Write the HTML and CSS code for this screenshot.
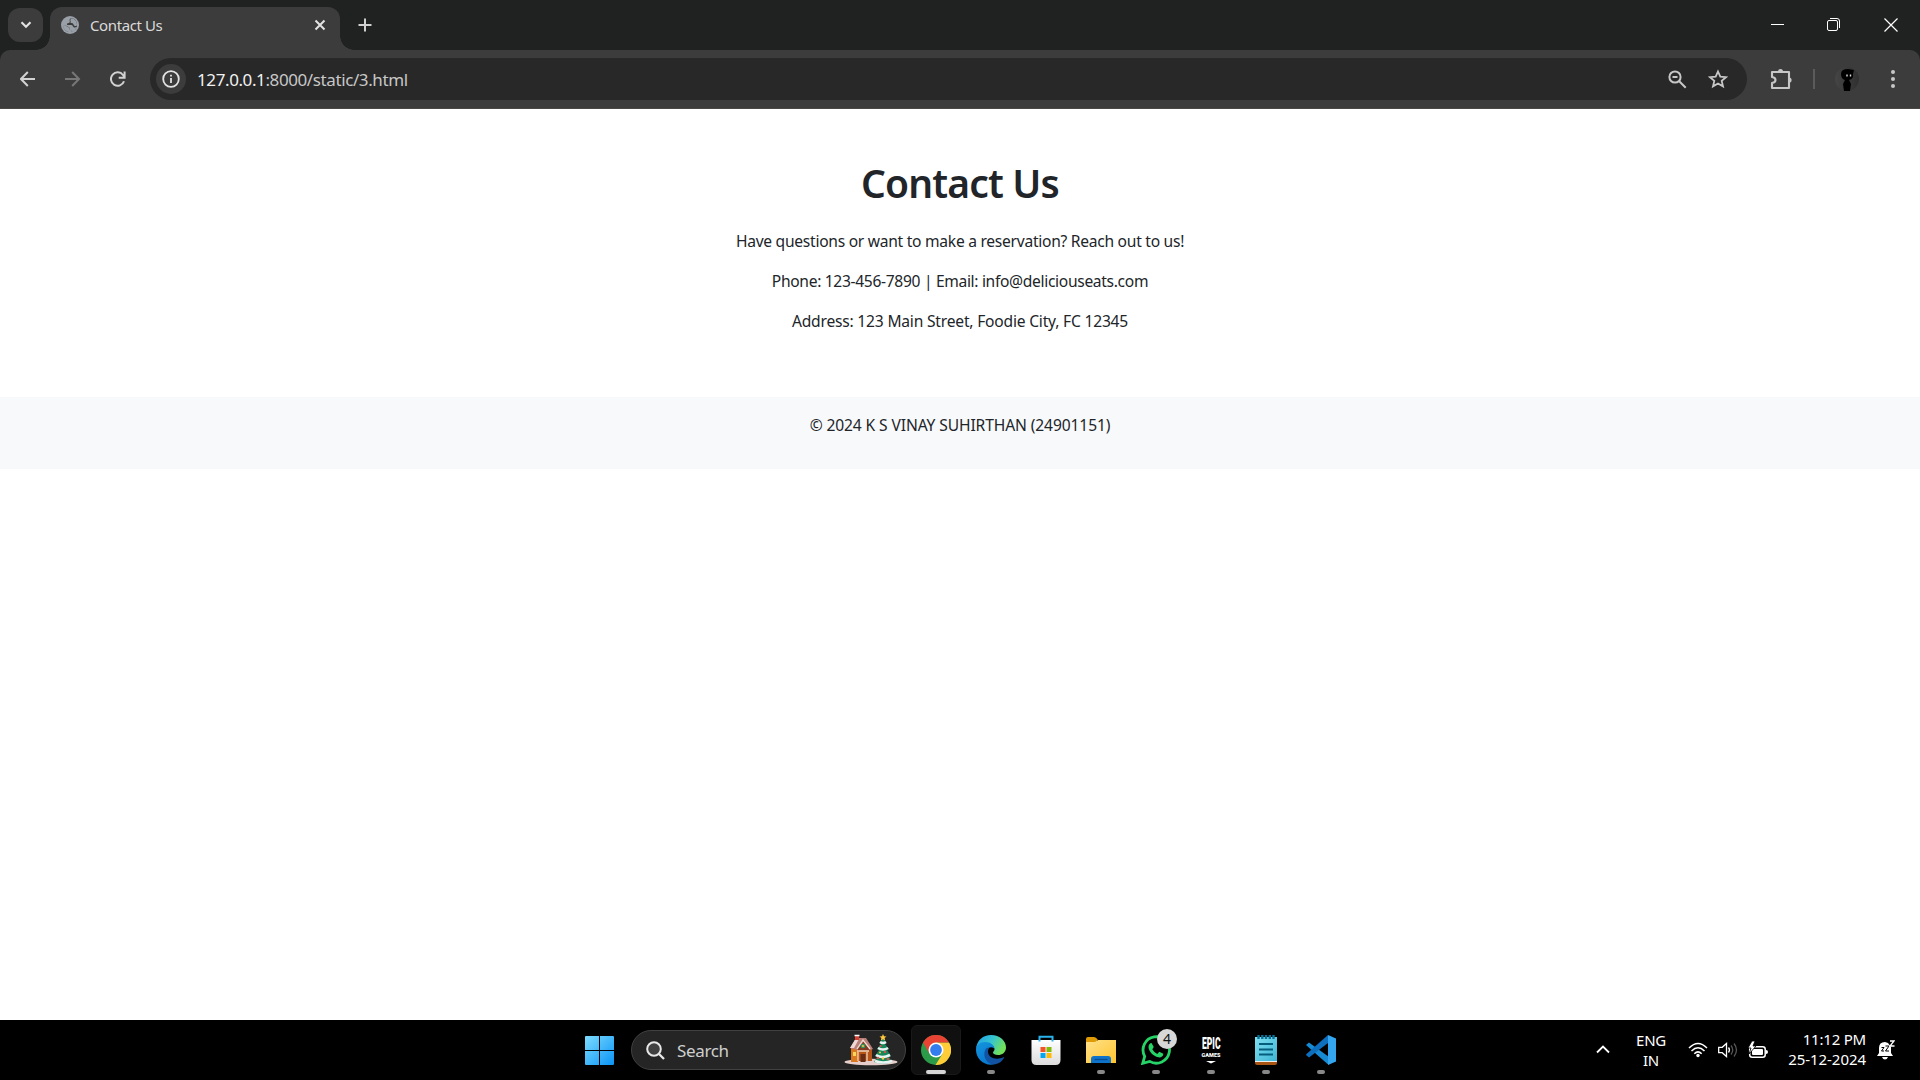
FILE: index.html
```html
<!DOCTYPE html>
<html lang="en">
<head>
<meta charset="utf-8">
<title>Contact Us</title>
<link rel="stylesheet" href="styles.css">
</head>
<body>
<div class="desktop">
  <div class="browser-top">
  <header class="tabstrip">
    <button class="tab-search"><svg width="12" height="8" viewBox="0 0 12 8"><path d="M1.5 1.2 6 5.7l4.500-4.500" fill="none" stroke="#e3e3e3" stroke-width="2.100"/></svg></button>
    <div class="tab">
      <svg class="favicon" width="18" height="18" viewBox="0 0 18 18"><circle cx="9" cy="9" r="9" fill="#9aa0a8"/><path d="M11 2.200C9 3 8.800 4 9.200 5.300c.3 1.200-.7 1.900-2 1.900-1 .1-1.200.8-.8 1.600h4.300c1.300 0 1.200 2.200 2.500 2.300.9.100 1.800.2 2.500-.4.700-4-1.500-7.500-4.700-8.500Z" fill="#9aa0a8"/><path d="M10.300 2.100C8.500 3 8.300 4.200 8.800 5.200c.2 1.300-.7 1.900-1.900 2-1 .1-1.200 1-.6 1.700h4c1.700 0 1.500 2.300 2.900 2.500.9.100 1.900 0 2.600-.6-.8 2.600-3 4.700-5.700 5.200l.1-1.800c-1.800-.1-2.200-1-1.600-2.600C7.400 11.200 5.500 10 4.300 9.300L2 9.500C3 14 6 16 9 16c4-.2 7-3 7-7s-2.500-6.500-5.700-6.900Z" fill="#3c3c3c"/><path d="m2 9 2.500.3c1 .9 2.500 2 4.100 2.300-.6 1.600-.2 2.500 1.600 2.600L10.100 16C5.500 16.500 2 13 2 9ZM10.500 2.200c3.500.4 5.700 3.500 5.500 7-.8 1-2 .9-2.600.6-1-.5-.7-2.500-2.400-2.800H9.300c.8-.7.400-1.600.1-2.300-.2-1 .2-1.800 1.100-2.500Z" fill="#9aa0a8"/></svg>
      <span class="tab-title">Contact Us</span>
      <svg width="12" height="12" viewBox="0 0 12 12"><path d="m1.500 1.500 9 9m0-9-9 9" stroke="#e3e3e3" stroke-width="2"/></svg>
    </div>
    <svg class="new-tab" width="14" height="14" viewBox="0 0 14 14"><path d="M7 .5v13M.5 7h13" stroke="#d0d0d0" stroke-width="2"/></svg>
    <div class="window-controls">
      <svg width="14" height="14" viewBox="0 0 14 14"><path d="M1 6.500h13" stroke="#fff"/></svg>
      <svg width="14" height="14" viewBox="0 0 14 14" fill="none" stroke="#fff"><rect x=".5" y="2.500" width="10" height="10" rx="1.500"/><path d="M3 .5h7q2.500 0 2.500 2.500v7"/></svg>
      <svg width="14" height="14" viewBox="0 0 14 14"><path d="m.5.5 13 13m0-13-13 13" stroke="#fff" stroke-width="1.200"/></svg>
    </div>
  </header>

  <nav class="toolbar">
    <div class="nav-buttons">
      <svg width="16" height="16" viewBox="0 0 16 16" fill="none" stroke="#d2d2d2" stroke-width="2"><path d="M15 8H1.500M7.800 1 1 8l6.800 7"/></svg>
      <svg width="16" height="16" viewBox="0 0 16 16" fill="none" stroke="#777" stroke-width="2"><path d="M0 8h13.500M7.200 1 14 8l-6.800 7"/></svg>
      <svg width="16" height="16" viewBox="0 0 16 16" fill="none" stroke="#d2d2d2" stroke-width="2"><path d="M14 10.200A6.700 6.700 0 1 1 13 4l1.300 2M14.600.5v6.200H8.700"/></svg>
    </div>
    <div class="omnibox">
      <span class="site-info"><svg width="18" height="18" viewBox="0 0 18 18" fill="none" stroke="#e3e3e3" stroke-width="1.800"><circle cx="9" cy="9" r="7.800"/><path d="M9 8v5M9 4.700v1.900"/></svg></span>
      <span class="url"><span class="host">127.0.0.1</span>:8000/static/3.html</span>
      <svg class="zoom-icon" width="19" height="19" viewBox="0 0 19 19" fill="none" stroke="#c7c7c7" stroke-width="2"><circle cx="7" cy="7" r="5.600"/><path d="m11 11 6.700 6.700M4.500 7h5"/></svg>
      <svg width="20" height="20" viewBox="0 0 20 20" fill="none" stroke="#c7c7c7" stroke-width="1.800"><path d="m10 2.500 2.300 5.200 5.700.5-4.300 3.700 1.300 5.500-5-2.900-5 2.900 1.300-5.500L2 8.200l5.700-.5Z"/></svg>
    </div>
    <svg class="extensions" width="22" height="22" viewBox="0 0 22 22"><path d="M2 4h17v16H2v-5q3.500-.5 3.500-3T2 9Z" fill="none" stroke="#c7c7c7" stroke-width="2.100" stroke-linejoin="round"/><path d="M8 3.500a2.500 2.500 0 0 1 5 0M19 9.500a2.600 2.600 0 0 1 0 5.200" fill="#c7c7c7"/></svg>
    <span class="divider"></span>
    <svg class="avatar" width="24" height="26" viewBox="0 0 24 26"><defs><linearGradient id="av"><stop stop-color="#454545"/><stop offset="1" stop-color="#303030"/></linearGradient></defs><circle cx="12" cy="13" r="12" fill="url(#av)"/><path d="M6 8q0-5 7-5l6 1-1 4q1 5-4 6l2 4-1 7H9L8 18l2-4q-4-1-4-6Z" fill="#000"/><path d="M12 8.500v2M15.500 8.500v2" stroke="#ddd" stroke-width="1.400"/></svg>
    <svg class="menu" width="4" height="18" viewBox="0 0 4 18" fill="#c7c7c7"><circle cx="2" cy="2" r="2"/><circle cx="2" cy="9" r="2"/><circle cx="2" cy="16" r="2"/></svg>
  </nav>
  </div>

  <main class="page">
    <section class="contact">
      <h1>Contact Us</h1>
      <p class="intro">Have questions or want to make a reservation? Reach out to us!</p>
      <p class="phone">Phone: 123-456-7890 | Email: info@deliciouseats.com</p>
      <p class="address">Address: 123 Main Street, Foodie City, FC 12345</p>
    </section>
    <footer class="page-footer"><p>© 2024 K S VINAY SUHIRTHAN (24901151)</p></footer>
  </main>

  <footer class="taskbar">
    <div class="app start"><svg width="29" height="29" viewBox="0 0 29 29"><defs><linearGradient id="win" x2="1" y2="1"><stop stop-color="#7ddcff"/><stop offset="1" stop-color="#0a93f5"/></linearGradient></defs><path d="M1 0h13v14H0V1q0-1 1-1Zm14 0h13q1 0 1 1v13H15ZM0 15h14v14H1q-1 0-1-1Zm15 0h14v13q0 1-1 1H15Z" fill="url(#win)"/></svg></div>
    <div class="search">
      <svg width="19" height="19" viewBox="0 0 19 19"><circle cx="8" cy="8" r="6.800" fill="#414141" stroke="#e8e8e8" stroke-width="2"/><path d="m13 13 5 5" stroke="#e8e8e8" stroke-width="2.300"/></svg>
      <span class="search-label">Search</span>
      <svg class="holiday" width="54" height="32" viewBox="0 0 54 32"><ellipse cx="27" cy="28" rx="26.500" ry="3.300" fill="#e6cfca"/><path d="M7 13 17 4l11 10v13H7Z" fill="#b75417"/><path d="M7 14h7v14H7Z" fill="#da7820"/><path d="m13 14 6-9 8 10-2 2H14Z" fill="#833a22"/><path d="m6 14 6-10h10l7 11-3 1-6-9-7 9Z" fill="#b98078"/><path d="m6 14 6-10 3 1-5 9Z" fill="#f0d9d5"/><path d="m13 15 6-9 7 9" stroke="#f1ded6" stroke-width="1.300" fill="none"/><path d="M11 2h4v4h-4Z" fill="#d4402f"/><path d="M10.500 1.500h5" stroke="#fff" stroke-width="1.500"/><circle cx="19" cy="12" r="2.300" fill="#249c62"/><circle cx="19" cy="12" r="1" fill="#ffc247"/><path d="M13 17h12M14 18v9m9-9v9" stroke="#f3d5bd" stroke-width="1.300"/><path d="M16.500 20h5v8h-5Z" fill="#672c16"/><path d="M9 18h3v4H9Z" fill="#ffd45b"/><path d="m39 3 3 6-1 1 4 5-2 1 4 6-2 1 3 5q-9 3-18 0l3-5-2-1 4-6-2-1 4-5-1-1Z" fill="#16875c"/><path d="M36 8q3 2 6 0M34 14q5 3 10 0m-12 7q6 4 14 0m-15 6q8 3 17 0" stroke="#e9f4f2" stroke-width="2.600" fill="none"/><g fill="#f04a48"><circle cx="36.500" cy="12" r="1"/><circle cx="41" cy="18" r="1.100"/><circle cx="34" cy="24" r="1.200"/><circle cx="44" cy="25" r="1.200"/></g><g fill="#ffc83d"><circle cx="36" cy="18.500" r="1"/><circle cx="39" cy="24.500" r="1.200"/><path d="m39 0 1 2.300 2.500.2-1.900 1.600.6 2.400L39 5.200l-2.200 1.300.6-2.400-1.900-1.600 2.500-.2Z"/></g></svg>
    </div>
    <div class="apps">
      <div class="app active"><svg width="30" height="30" viewBox="0 0 30 30"><circle cx="15" cy="15" r="15" fill="#2b9b49"/><path d="M15 7.500h13A15 15 0 0 1 14.500 30l7-11.200Z" fill="#ffcd37"/><path d="M2 7.500A15 15 0 0 1 28 7.500H15l-6.500 11.300Z" fill="#e94334"/><circle cx="15" cy="15" r="7.500" fill="#fff"/><circle cx="15" cy="15" r="5.900" fill="#347dee"/></svg></div>
      <div class="app running"><svg width="30" height="30" viewBox="0 0 30 30"><defs><linearGradient id="e1" x2="1" y2=".4"><stop stop-color="#1b9ee8"/><stop offset=".55" stop-color="#35c4cf"/><stop offset="1" stop-color="#72e05a"/></linearGradient><linearGradient id="e2" x2=".6" y2="1"><stop stop-color="#1496dd"/><stop offset="1" stop-color="#0876cf"/></linearGradient></defs><path d="M0 14C1 5 7 0 15 0c9 0 15 6 15 12.500 0 5-4 7.500-8 7.500-3 0-5-1-5-2.500 0-1 1.500-1.500 1.500-3.500C18.500 11 14 9 10 9 5 9 1 11 0 14Z" fill="url(#e1)"/><path d="M0 15C0 10 4 7 9 7c6 0 9.500 3.500 9.500 7-.5-1-1.700-1.700-3-1.700C11 12.300 9 16 9 19c0 6 5 10 10 10-9 3-19-4-19-14Z" fill="url(#e2)"/><path d="M10.500 13C5 20 11 30 19 29.300c4-.6 7-3 9-6.300.5-.8 0-1-.6-.7-7 3.300-15 .7-15.400-5.300-.1-2 .5-3 1.500-4.500Z" fill="#1152a2"/></svg></div>
      <div class="app store"><svg width="30" height="30" viewBox="0 0 30 30"><defs><linearGradient id="st" x2="0" y2="1"><stop stop-color="#fff"/><stop offset="1" stop-color="#dcdcdc"/></linearGradient></defs><path d="M.5 5h29v20q0 5-5 5h-19q-5 0-5-5Z" fill="url(#st)"/><path d="M8.500 6.500V1.800h13v4.700" fill="none" stroke="#28b3ed" stroke-width="2"/><path d="M9.500 12h5v5h-5Z" fill="#f35325"/><path d="M15.500 12h5v5h-5Z" fill="#81bc06"/><path d="M9.500 18h5v5h-5Z" fill="#05a6f0"/><path d="M15.500 18h5v5h-5Z" fill="#ffba08"/></svg></div>
      <div class="app running"><svg width="30" height="30" viewBox="0 0 30 30"><defs><linearGradient id="fo" x2="1" y2="1"><stop stop-color="#ffe18a"/><stop offset="1" stop-color="#ffc42e"/></linearGradient></defs><path d="M0 4q0-2 2-2h6q2 0 4 3h-1v5H0Z" fill="#df9b05"/><path d="M0 7h9l3-2h18v23H0Z" fill="url(#fo)"/><path d="M5 28v-4q0-3 3-3h14q3 0 3 3v4Z" fill="#0f73c9"/><path d="M8.500 24.500h13" stroke="#064e91" stroke-width="1.300"/></svg></div>
      <div class="app running"><svg width="30" height="30" viewBox="0 0 30 30"><path d="m1.700 28.300 2-7A13.200 13.200 0 1 1 8.700 26.400Z" fill="none" stroke="#25d366" stroke-width="2.800"/><path d="M10.500 8 12.800 12l-1.500 2.300q1.700 3.300 5 4.700l2-2.200 4 2c0 3-3 4-5 3.500C12 21.200 8 16.500 7.500 12.500 7.300 10 9 8 10.500 8Z" fill="#25d366"/></svg><span class="badge">4</span></div>
      <div class="app running epic"><span class="epic-name">EPIC</span><span class="epic-games">GAMES</span><svg width="10" height="3" viewBox="0 0 10 3"><path d="M0 0h10L5 2.500Z" fill="#fff"/></svg></div>
      <div class="app running"><svg width="24" height="30" viewBox="0 0 24 30"><defs><linearGradient id="no" x2="1" y2="1"><stop stop-color="#80dff0"/><stop offset="1" stop-color="#3eb5d6"/></linearGradient></defs><path d="M1 25h22v3q0 2-2 2H3q-2 0-2-2Z" fill="#a95412"/><path d="M1 25h22v2H1Z" fill="#eee"/><path d="M1 2h22v24H1Z" fill="url(#no)"/><path d="M5 9h14M5 14.500h14M5 19.500h14" stroke="#055c7d" stroke-width="2"/><path d="M4.500 0v4M8.300 0v4M12 0v4M15.800 0v4M19.500 0v4" stroke="#087195" stroke-width="2.400"/></svg></div>
      <div class="app running"><svg width="30" height="30" viewBox="0 0 30 30"><path d="M0 10 3 7.500 23 22v7.500L21.500 29Z" fill="#168bd4"/><path d="m0 20 3 2.500L22 8V0L.5 19Z" fill="#0d6fbd"/><path d="M22 0v30l8-3.500v-23Z" fill="#34a6ef"/></svg></div>
    </div>
    <div class="tray">
      <svg class="chevron" width="14" height="9" viewBox="0 0 14 9"><path d="m1 7.500 6-6 6 6" fill="none" stroke="#fff" stroke-width="1.800"/></svg>
      <div class="language"><span>ENG</span><span>IN</span></div>
      <div class="status">
        <svg width="20" height="16" viewBox="0 0 20 16" fill="none" stroke="#fff" stroke-width="1.500"><path d="M1 6q9-9 18 0M3.500 9q6.500-6.500 13 0M6.300 11.700q3.700-3.600 7.400 0"/><circle cx="10" cy="13.500" r="1.700" fill="#fff" stroke="none"/></svg>
        <svg width="20" height="16" viewBox="0 0 20 16" fill="none" stroke="#fff" stroke-width="1.300"><path d="M.7 5.300h3.500L8.500 1.500v13l-4.300-3.800H.7ZM10.500 5.500q2 2.500 0 5"/><path d="M13 3.500q3.500 4.500 0 9M16 1.500q5 6.500 0 13" stroke="#555"/></svg>
        <svg width="21" height="18" viewBox="0 0 21 18"><rect x="1.700" y="5.700" width="15.500" height="10.500" rx="2.500" fill="none" stroke="#fff" stroke-width="1.500"/><rect x="4" y="8" width="11" height="6" rx="1" fill="#fff"/><path d="M18 9q2 0 2 2t-2 2Z" fill="#fff"/><path d="M4 0 0 7h3l-2 6 7-8H5l2-5Z" fill="#fff" stroke="#000" stroke-width=".8"/></svg>
      </div>
      <div class="clock"><span class="time">11:12 PM</span><span class="date">25-12-2024</span></div>
      <svg class="bell" width="18" height="20" viewBox="0 0 18 20"><path d="M8 2Q2 2 2 8v5l-2 3h16l-2-3V7L11 3Z" fill="#fff"/><path d="M5 17h6q-1 2.500-3 2.500T5 17Z" fill="#fff"/><path d="M4.500 7.500H7L4.500 11H7M8.500 6H12l-3.500 5H12" fill="none" stroke="#000"/><path d="M13 1h4l-4 5h4.500" fill="none" stroke="#fff" stroke-width="1.300"/></svg>
    </div>
  </footer>
</div>
</body>
</html>
```
FILE: styles.css
```css
* { box-sizing: border-box; }
body { margin: 0; font-family: "Noto Sans", "Open Sans", sans-serif; }
h1, p { margin: 0; }
svg { display: block; flex: none; }
button { border: 0; padding: 0; }
.desktop { width: 1920px; height: 1080px; display: flex; flex-direction: column; overflow: hidden; background: #fff; }

.browser-top { flex: none; background: #202221; }
.tabstrip { height: 50px; display: flex; align-items: flex-start; padding-left: 8px; }
.tab-search { width: 35px; height: 34px; margin-top: 8px; border-radius: 12px; background: #3c3c3c; display: flex; align-items: center; justify-content: center; }
.tab { position: relative; width: 290px; height: 43px; margin: 7px 0 0 7px; padding: 0 14px 7px 11px; border-radius: 12px 12px 0 0; background: #3c3c3c; display: flex; align-items: center; }
.tab::before, .tab::after { content: ""; position: absolute; bottom: 0; width: 14px; height: 14px; }
.tab::before { left: -14px; background: radial-gradient(circle at 0 0, transparent 13.5px, #3c3c3c 14px); }
.tab::after { right: -14px; background: radial-gradient(circle at 100% 0, transparent 13.5px, #3c3c3c 14px); }
.tab-title { margin-left: 11px; flex: 1; font-size: 15px; letter-spacing: -.4px; color: #dadada; white-space: nowrap; }
.new-tab { margin: 18px 0 0 18px; }
.window-controls { margin: 18px 22px 0 auto; display: flex; gap: 43px; }

.toolbar { height: 59px; display: flex; align-items: center; background: #3c3c3c; border-bottom: 1px solid #4b4646; border-radius: 10px 10px 0 0; padding: 0 25px 0 20px; }
.nav-buttons { display: flex; gap: 29px; width: 130px; }
.omnibox { width: 1597px; height: 42px; border-radius: 21px; background: #282828; display: flex; align-items: center; padding: 0 19px 0 6px; }
.site-info { width: 30px; height: 30px; border-radius: 50%; background: #3c3c3c; display: flex; align-items: center; justify-content: center; }
.url { margin-left: 11px; font-size: 17px; letter-spacing: -.4px; color: #c7c7c7; white-space: nowrap; }
.host { color: #f1f1f1; }
.zoom-icon { margin: 0 21px 0 auto; }
.extensions { margin-left: 23px; }
.divider { width: 2px; height: 20px; margin-left: 21px; background: #5b5b5b; }
.avatar { margin-left: 20px; }
.menu { margin-left: auto; }

.page { flex: 1; color: #212529; font-size: 15.6px; line-height: 24px; text-align: center; }
.contact { padding: 49px 0 48px; }
.contact h1 { font-size: 39px; line-height: 50px; font-weight: 600; letter-spacing: -.85px; margin-bottom: 21px; }
.contact p { margin-bottom: 16px; }
.intro { letter-spacing: -.27px; }
.phone { letter-spacing: -.32px; }
.address { letter-spacing: -.2px; }
.page-footer { height: 72px; padding: 16px; background: #f8f9fa; letter-spacing: -.11px; }

.taskbar { height: 60px; flex: none; display: flex; align-items: center; background: #000; padding-left: 575px; color: #fff; }
.app { position: relative; width: 50px; height: 50px; border-radius: 6px; display: flex; align-items: center; justify-content: center; }
.start { padding: 1px 1px 0 0; }
.store { padding-right: 1px; }
.search { width: 275px; height: 40px; margin: 0 5px 0 6px; border: 1px solid #414141; border-radius: 20px; background: #252525; display: flex; align-items: center; padding: 0 7px 0 14px; }
.search-label { margin-left: 12px; font-size: 17px; letter-spacing: -.35px; color: #cfcfcf; }
.holiday { margin-left: auto; }
.apps { display: flex; gap: 5px; }
.active { background: #101010; border: 1px solid #191919; }
.active::after, .running::after { content: ""; position: absolute; left: 50%; bottom: 1px; width: 8px; height: 4px; margin-left: -4px; border-radius: 2px; background: #888; }
.active::after { width: 20px; margin-left: -10px; bottom: 0; background: #d6d6d6; }
.badge { position: absolute; left: 26px; top: 4px; width: 20px; height: 20px; border-radius: 50%; background: #d7d7d7; color: #111; font-size: 14px; line-height: 20px; text-align: center; }
.epic { flex-direction: column; font-family: "Roboto", sans-serif; font-weight: 900; }
.epic-name { font-size: 15px; line-height: 15px; transform: scaleX(.57) scaleY(1.1); }
.epic-games { font-size: 5.500px; line-height: 7px; margin-bottom: 2px; }
.tray { margin-left: auto; display: flex; align-items: center; padding-right: 25px; }
.chevron { margin: 0 26px 1px 0; }
.language { width: 30px; text-align: center; }
.language, .clock { display: flex; flex-direction: column; font-size: 15px; line-height: 20px; letter-spacing: -.2px; }
.status { display: flex; align-items: center; gap: 10px; margin-left: 22px; }
.clock { width: 98px; align-items: flex-end; margin: 0 11px 2px -1px; white-space: nowrap; }
.date { letter-spacing: -.05px; }
```
